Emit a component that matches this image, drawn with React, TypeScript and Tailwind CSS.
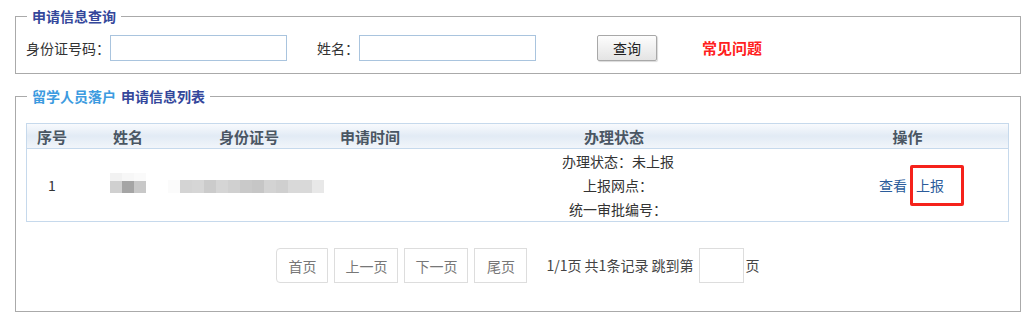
const nameBlur = [
  ['#f2f2f2', '#f7f7f7', '#fafafa'],
  ['#d0d0d0', '#a5a5a5', '#c8c8c8'],
]

const idBlur = [
  '#fbfbfb', '#d4d4d4', '#d6d6d6', '#cbcbcb', '#d5d5d5', '#d0d0d0', '#c9c9c9',
  '#c6c6c6', '#d3d3d3', '#cfcfcf', '#d9d9d9', '#d9d9d9', '#e8e8e8',
]

const pageButtons = [
  { label: '首页', w: 'w-[52px]', extra: 'rounded-l-[4px]' },
  { label: '上一页', w: 'w-[64px]', extra: '' },
  { label: '下一页', w: 'w-[64px]', extra: '' },
  { label: '尾页', w: 'w-[53px]', extra: '' },
]

const cols = 'grid grid-cols-[50px_102px_140px_102px_386px_1fr]'

export default function App() {
  return (
    <div className="h-[323px] w-[1033px] overflow-hidden bg-white pt-[6px] font-['Noto_Sans_CJK_SC',sans-serif] text-[14px] text-[#333]">
      {/* 查询 */}
      <fieldset className="ml-[15px] w-[1006px] border border-[#aaaaaa] px-[10px] pt-[9px] pb-[12px]">
        <legend className="ml-[1px] px-[5px] text-[14px] font-bold leading-[20px] text-[#34479b]">
          申请信息查询
        </legend>
        <div className="flex h-[26px] items-center leading-[26px]">
          <span>身份证号码：</span>
          <input className="h-[26px] w-[177px] border border-[#a9c4de] bg-white outline-none" />
          <span className="ml-[30px]">姓名：</span>
          <input className="h-[26px] w-[177px] border border-[#a9c4de] bg-white outline-none" />
          <button className="ml-[61px] h-[26px] w-[60px] rounded-[2px] border border-[#a8a8a8] bg-gradient-to-b from-[#fdfdfd] to-[#e4e4e4] text-[14px] leading-[24px] text-[#222] shadow-[1px_1px_1px_rgba(0,0,0,0.15)]">
            查询
          </button>
          <a className="ml-[45px] text-[15px] font-bold text-[#ff2020]">常见问题</a>
        </div>
      </fieldset>

      {/* 列表 */}
      <fieldset className="mt-[12px] ml-[15px] w-[1006px] border border-[#aaaaaa] px-[10px] pt-[17px] pb-[28px]">
        <legend className="ml-[1px] px-[5px] text-[14px] font-bold leading-[20px]">
          <span className="text-[#3d9be0]">留学人员落户</span>
          <span className="ml-[5px] text-[#34479b]">申请信息列表</span>
        </legend>

        <div className="w-[983px] border border-[#c6d9ec]">
          <div
            className={`${cols} h-[25px] items-center border-b border-[#c6d9ec] bg-gradient-to-b from-[#f8fafd] via-[#e2ebf5] to-[#f1f5fa] text-center text-[15px] font-bold leading-[25px] text-[#4a5663]`}
          >
            <span>序号</span>
            <span>姓名</span>
            <span>身份证号</span>
            <span>申请时间</span>
            <span>办理状态</span>
            <span>操作</span>
          </div>
          <div className={`${cols} h-[72px] items-center text-center`}>
            <span>1</span>
            <div className="flex flex-col items-center pb-[5px]">
              {nameBlur.map((row, i) => (
                <div key={i} className={`flex ${i === 0 ? 'h-[8px]' : 'h-[12px]'}`}>
                  {row.map((c, j) => (
                    <div key={j} className="w-[12px] shrink-0" style={{ backgroundColor: c }} />
                  ))}
                </div>
              ))}
            </div>
            <div className="-ml-[11px] flex pt-[3px]">
              {idBlur.map((c, i) => (
                <div key={i} className="h-[13px] w-[12px] shrink-0" style={{ backgroundColor: c }} />
              ))}
            </div>
            <span />
            <div className="flex flex-col items-center pl-[8px] leading-[24px]">
              <span>办理状态：未上报</span>
              <span>上报网点：</span>
              <span>统一审批编号：</span>
            </div>
            <div className="flex items-center pl-[72px] text-[#2b5c9b]">
              <a>查看</a>
              <span className="ml-[3px] flex h-[41px] w-[54px] items-center rounded-[2px] border-[3px] border-[#f5221b] pl-[3px]">
                <a>上报</a>
              </span>
            </div>
          </div>
        </div>

        <div className="mt-[26px] flex items-center justify-center leading-[35px]">
          {pageButtons.map((b) => (
            <button
              key={b.label}
              className={`mr-[6px] h-[35px] ${b.w} ${b.extra} border border-[#dddddd] bg-white text-[14px] text-[#777]`}
            >
              {b.label}
            </button>
          ))}
          <span className="ml-[13px] text-[14px] text-[#444]">1/1页 共1条记录 跳到第</span>
          <input className="ml-[5px] h-[35px] w-[45px] border border-[#dddddd] bg-white outline-none" />
          <span className="ml-[2px] text-[14px] text-[#444]">页</span>
        </div>
      </fieldset>
    </div>
  )
}
